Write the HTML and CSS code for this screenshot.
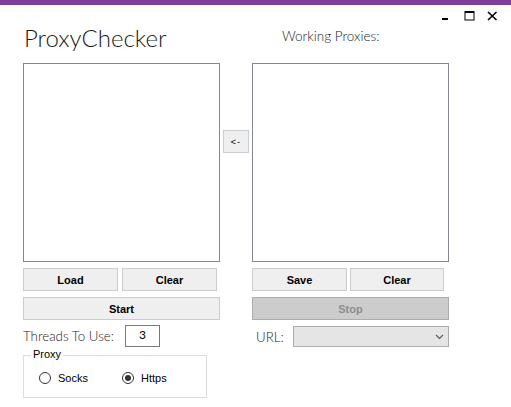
FILE: index.html
```html
<!DOCTYPE html>
<html>
<head>
<meta charset="utf-8">
<link rel="stylesheet" href="styles.css">
</head>
<body>
<div class="window">
  <div class="accent"></div>
  <div class="caption-buttons">
    <svg class="cap cap-min" width="8" height="10" viewBox="0 0 8 10"><rect x="1" y="7" width="6" height="2" fill="#000"/></svg>
    <svg class="cap cap-max" width="11" height="10" viewBox="0 0 11 10"><rect x="1" y="0.5" width="9" height="8.5" fill="none" stroke="#000" stroke-width="1"/><rect x="1" y="0.5" width="9" height="1.5" fill="#000"/></svg>
    <svg class="cap cap-close" width="11" height="10" viewBox="0 0 11 10"><path d="M1 1 L9.5 9 M9.5 1 L1 9" stroke="#000" stroke-width="1.6" fill="none"/></svg>
  </div>
  <div class="main">
    <div class="col">
      <div class="head"><div class="title">ProxyChecker</div></div>
      <div class="listbox"></div>
      <div class="btnrow">
        <button class="btn">Load</button>
        <button class="btn">Clear</button>
      </div>
      <button class="btn wide">Start</button>
      <div class="threads">
        <span class="label">Threads To Use:</span>
        <div class="num">3</div>
      </div>
      <div class="group">
        <div class="legend">Proxy</div>
        <div class="radios">
          <label class="radio"><span class="dot"></span>Socks</label>
          <label class="radio checked"><span class="dot"></span>Https</label>
        </div>
      </div>
    </div>
    <div class="mid">
      <button class="btn arrow">&lt;-</button>
    </div>
    <div class="col">
      <div class="head"><div class="subtitle">Working Proxies:</div></div>
      <div class="listbox"></div>
      <div class="btnrow right">
        <button class="btn">Save</button>
        <button class="btn">Clear</button>
      </div>
      <button class="btn wide disabled">Stop</button>
      <div class="urlrow">
        <span class="label">URL:</span>
        <div class="combo">
          <svg width="9" height="6" viewBox="0 0 9 6"><path d="M1 1 L4.5 4.5 L8 1" stroke="#555" stroke-width="1.1" fill="none"/></svg>
        </div>
      </div>
    </div>
  </div>
</div>
</body>
</html>
```
FILE: styles.css
```css
html, body {
  margin: 0;
  padding: 0;
  background: #fff;
}
.window {
  position: relative;
  width: 511px;
  height: 407px;
  overflow: hidden;
  background: #fff;
  font-family: "Liberation Sans", Arial, sans-serif;
}
.accent {
  height: 5px;
  background: #7d3f98;
}
.caption-buttons {
  position: absolute;
  top: 11px;
  right: 13px;
  display: flex;
  gap: 12px;
  align-items: flex-start;
}
.cap { display: block; }
.cap-min { margin-right: 3px; }
.main {
  display: flex;
  padding-left: 23px;
}
.col {
  width: 197px;
  display: flex;
  flex-direction: column;
}
.mid {
  width: 32px;
  display: flex;
  justify-content: center;
  padding-top: 125px;
}
.head {
  height: 58px;
  position: relative;
}
.title {
  font-family: Lato, "Open Sans", sans-serif;
  font-weight: 300;
  font-size: 24px;
  line-height: 30px;
  color: #1a1a1a;
  margin-top: 18px;
  margin-left: 1px;
}
.subtitle {
  font-family: Lato, "Open Sans", sans-serif;
  font-weight: 300;
  font-size: 13.5px;
  line-height: 16px;
  color: #1a1a1a;
  margin-top: 23px;
  margin-left: 30px;
}
.listbox {
  height: 197px;
  border: 1px solid #828790;
  background: #fff;
}
.btn {
  font-family: "Liberation Sans", Arial, sans-serif;
  font-weight: bold;
  font-size: 11px;
  color: #000;
  background: #efefef;
  border: 1px solid #cccccc;
  padding: 0;
  margin: 0;
  height: 23px;
  box-sizing: border-box;
}
.btnrow {
  display: flex;
  gap: 4px;
  margin-top: 6px;
}
.btnrow .btn { width: 95px; }
.btnrow.right { gap: 3px; }
.btnrow.right .btn:last-child { width: 94px; }
.wide {
  width: 197px;
  margin-top: 6px;
}
.disabled {
  background: #cccccc;
  border-color: #adadad;
  color: #8d8d8d;
}
.arrow {
  width: 26px;
  height: 23px;
  font-size: 9px;
  font-weight: normal;
  letter-spacing: 1px;
}
.label {
  font-family: Lato, "Open Sans", sans-serif;
  font-weight: 300;
  font-size: 13.3px;
  color: #1a1a1a;
}
.threads {
  display: flex;
  align-items: center;
  margin-top: 5px;
  height: 22px;
}
.threads .label { width: 102px; }
.num {
  width: 35px;
  height: 22px;
  box-sizing: border-box;
  border: 1px solid #7a7a7a;
  font-family: Lato, "Open Sans", sans-serif;
  font-size: 12px;
  line-height: 18px;
  text-align: center;
  color: #000;
}
.group {
  position: relative;
  width: 184px;
  height: 43px;
  box-sizing: border-box;
  border: 1px solid #dcdcdc;
  margin-top: 8px;
}
.legend {
  position: absolute;
  top: -8px;
  left: 7px;
  padding: 0 2px;
  background: #fff;
  font-size: 11px;
  line-height: 13px;
  color: #000;
}
.radios {
  display: flex;
  padding: 16px 0 0 15px;
}
.radio {
  display: flex;
  align-items: center;
  font-size: 11px;
  color: #000;
  width: 83px;
}
.dot {
  width: 12px;
  height: 12px;
  box-sizing: border-box;
  border: 1px solid #333;
  border-radius: 50%;
  margin-right: 7px;
  position: relative;
  background: #fff;
}
.checked .dot::after {
  content: "";
  position: absolute;
  left: 2px;
  top: 2px;
  width: 6px;
  height: 6px;
  border-radius: 50%;
  background: #333;
}
.urlrow {
  display: flex;
  align-items: center;
  margin-top: 6px;
  height: 21px;
}
.urlrow .label {
  width: 41px;
  padding-left: 4px;
  box-sizing: border-box;
}
.combo {
  width: 156px;
  height: 21px;
  box-sizing: border-box;
  border: 1px solid #adadad;
  background: #e5e5e5;
  display: flex;
  align-items: center;
  justify-content: flex-end;
  padding-right: 4px;
}
.combo svg { display: block; }
```
